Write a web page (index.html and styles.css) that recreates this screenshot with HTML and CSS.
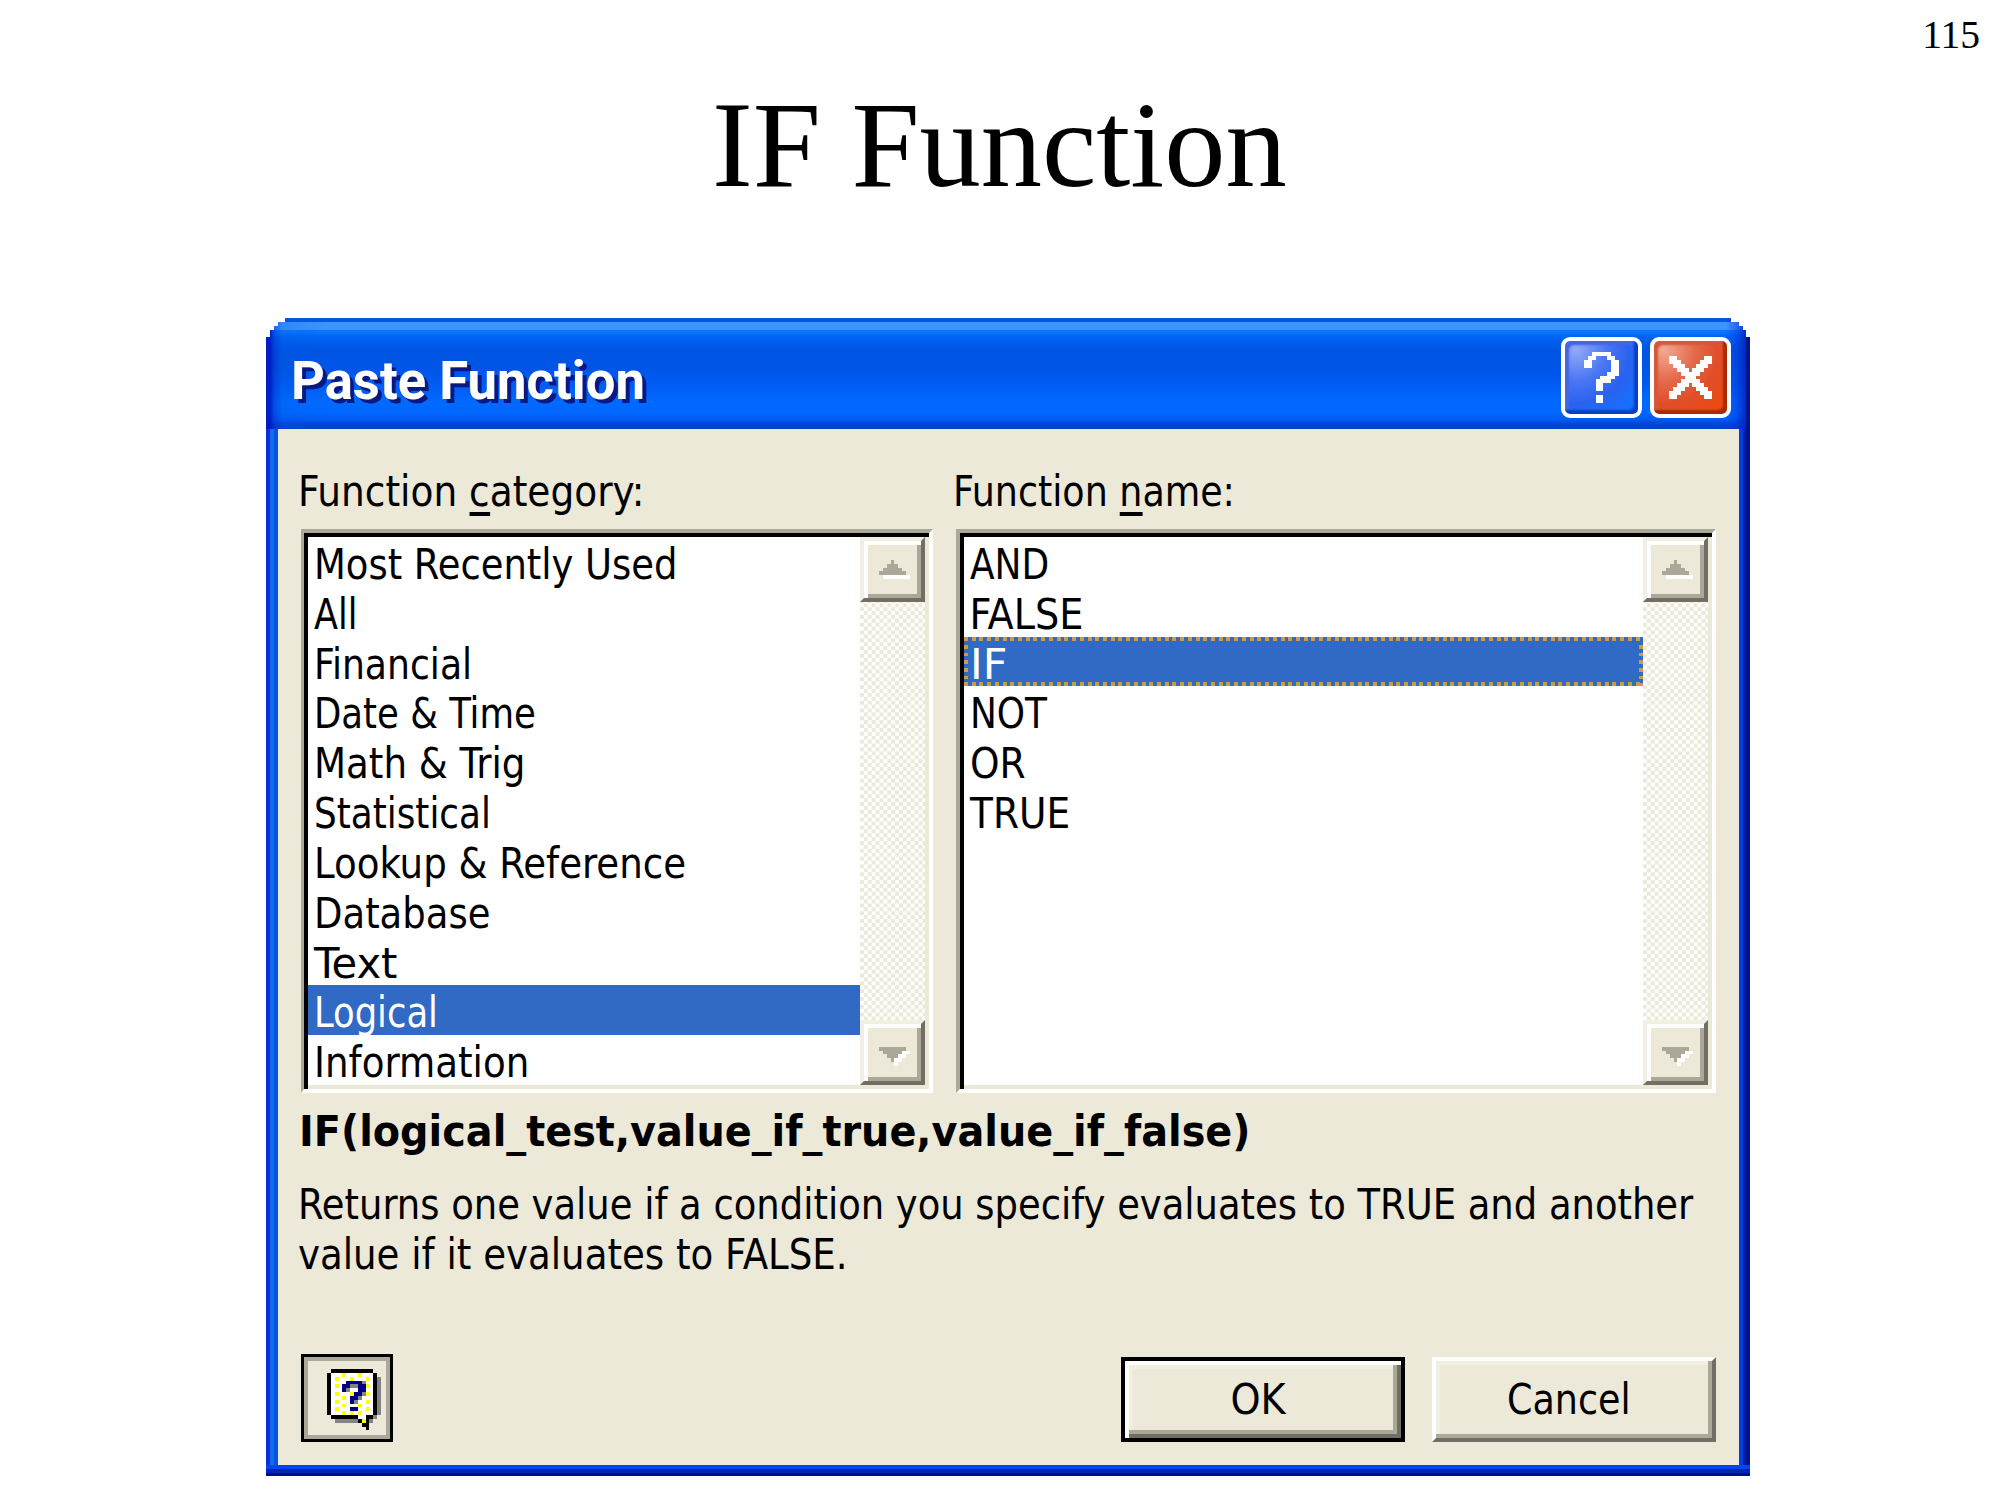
FILE: index.html
```
<!DOCTYPE html>
<html lang="en">
<head>
<meta charset="utf-8">
<title>IF Function</title>
<link rel="stylesheet" href="styles.css">
</head>
<body>
<main class="slide">
  <div class="page-number">115</div>
  <h1 class="heading"><span data-w="575">IF Function</span></h1>

  <section class="dialog">
    <header class="titlebar">
      <h2 class="title"><span data-w="354">Paste Function</span></h2>
      <div class="caption-buttons">
        <button class="caption help" aria-label="Help">
          <svg viewBox="0 0 21 21" shape-rendering="crispEdges"><path fill="#fff" d="M8 4h5v1h1v1h1v4h-1v1h-1v1h-2v2H9v-3h1v-1h2V9h1V6h-1V5H9v1H8v2H6V6h1V5h1zM9 15h2v2H9z"/></svg>
        </button>
        <button class="caption close" aria-label="Close">
          <svg viewBox="0 0 21 21" shape-rendering="crispEdges"><path fill="#fff" d="M5 5h2v1h1v1h1v1h1v1h1V8h1V7h1V6h1V5h2v2h-1v1h-1v1h-1v1h-1v1h1v1h1v1h1v1h1v2h-2v-1h-1v-1h-1v-1h-1v-1h-1v1H9v1H8v1H7v1H5v-2h1v-1h1v-1h1v-1h1v-1H8V9H7V8H6V7H5z"/></svg>
        </button>
      </div>
    </header>

    <div class="content">
      <div class="columns">
        <div class="column">
          <div class="label"><span data-w="346">Function <u>c</u>ategory:</span></div>
          <div class="listbox">
            <ul class="items">
              <li><span data-w="364">Most Recently Used</span></li>
              <li><span data-w="43">All</span></li>
              <li><span data-w="158">Financial</span></li>
              <li><span data-w="222">Date &amp; Time</span></li>
              <li><span data-w="211">Math &amp; Trig</span></li>
              <li><span data-w="177">Statistical</span></li>
              <li><span data-w="372">Lookup &amp; Reference</span></li>
              <li><span data-w="176">Database</span></li>
              <li><span data-w="84">Text</span></li>
              <li class="selected"><span data-w="124">Logical</span></li>
              <li><span data-w="215">Information</span></li>
            </ul>
            <div class="scrollbar">
              <div class="arrow"><svg viewBox="0 0 17 17" shape-rendering="crispEdges"><path fill="#fff" d="M6 10h7v1H6z"/><path fill="#aca899" d="M8 6h1v1h1v1h1v1h1v1H5V9h1V8h1V7h1z"/></svg></div>
              <div class="arrow"><svg viewBox="0 0 17 17" shape-rendering="crispEdges"><path fill="#fff" d="M11 8h2v1h-1v1h-1v1h-1v1H9v-2h1V9h1z"/><path fill="#aca899" d="M5 7h7v1h-1v1h-1v1H9v1H8v-1H7V9H6V8H5z"/></svg></div>
            </div>
          </div>
        </div>
        <div class="column wide">
          <div class="label"><span data-w="282">Function <u>n</u>ame:</span></div>
          <div class="listbox">
            <ul class="items">
              <li><span data-w="79">AND</span></li>
              <li><span data-w="114">FALSE</span></li>
              <li class="selected focused"><span data-w="37">IF</span></li>
              <li><span data-w="77">NOT</span></li>
              <li><span data-w="56">OR</span></li>
              <li><span data-w="100">TRUE</span></li>
            </ul>
            <div class="scrollbar">
              <div class="arrow"><svg viewBox="0 0 17 17" shape-rendering="crispEdges"><path fill="#fff" d="M6 10h7v1H6z"/><path fill="#aca899" d="M8 6h1v1h1v1h1v1h1v1H5V9h1V8h1V7h1z"/></svg></div>
              <div class="arrow"><svg viewBox="0 0 17 17" shape-rendering="crispEdges"><path fill="#fff" d="M11 8h2v1h-1v1h-1v1h-1v1H9v-2h1V9h1z"/><path fill="#aca899" d="M5 7h7v1h-1v1h-1v1H9v1H8v-1H7V9H6V8H5z"/></svg></div>
            </div>
          </div>
        </div>
      </div>

      <p class="syntax"><span data-w="951">IF(logical_test,value_if_true,value_if_false)</span></p>
      <p class="description">
        <span data-w="1395">Returns one value if a condition you specify evaluates to TRUE and another</span><br>
        <span data-w="550">value if it evaluates to FALSE.</span>
      </p>

      <footer class="actions">
        <button class="assistant" aria-label="Office Assistant">
          <svg viewBox="0 0 14 16" shape-rendering="crispEdges">
            <path fill="#848284" d="M13 2h1v10h-1v1h-1v1h-1v-2h1V2zM2 13h6v1H2z"/>
            <path fill="#000" d="M1 0h11v1h1v11h-1v1h-1v3h-1v-1H9v-1H8v-1H1v-1H0V1h1z"/>
            <path fill="#fff" d="M1 1h11v11h-2v1H8v-1H1z"/>
            <path fill="#ff0" d="M4 1h1v1H4zM8 1h1v1H8zM2 2h1v1H2zM6 2h1v1H6zM10 2h1v1h-1zM2 4h1v1H2zM6 4h1v1H6zM10 4h1v1h-1zM2 6h1v1H2zM6 6h1v1H6zM10 6h1v1h-1zM4 7h1v1H4zM2 8h1v1H2zM10 8h1v1h-1zM4 9h1v1H4zM8 9h1v1H8zM2 10h1v1H2zM10 10h1v1h-1zM4 11h1v1H4zM6 11h1v1H6zM8 11h1v1H8zM9 13h1v1H9z"/>
            <path fill="#848284" d="M9 3h1v1h-1zM6 4h2v1H6zM5 5h1v1H5zM9 6h1v1H9zM6 7h1v1H6zM8 7h1v1H8zM7 8h1v1H7z"/>
            <path fill="#000084" d="M5 3h4v1h1v2H9v1H8v1H7v1H6V7h1V6h1V4H6v1H5v1H4V4h1zM6 10h2v1H6z"/>
          </svg>
        </button>
        <div class="confirm">
          <button class="push default"><span data-w="55">OK</span></button>
          <button class="push"><span data-w="124">Cancel</span></button>
        </div>
      </footer>
    </div>
  </section>
</main>
<script src="fit.js"></script>
</body>
</html>
```
FILE: fit.js
```
document.querySelectorAll('[data-w]').forEach(function (el) {
  var ratio = Number(el.dataset.w) / el.offsetWidth;
  el.style.transform = 'scaleX(' + ratio.toFixed(4) + ')';
});
```
FILE: styles.css
```
* { box-sizing: border-box; }

body {
  margin: 0;
  background: #fff;
  color: #000;
  font-family: "DejaVu Sans Condensed", "DejaVu Sans", sans-serif;
  font-size: 42.5px;
}

.slide {
  width: 2000px;
  height: 1500px;
  overflow: hidden;
}

h1, h2, p, ul { margin: 0; padding: 0; font-weight: normal; }

[data-w] {
  display: inline-block;
  white-space: nowrap;
  transform-origin: left center;
}

.page-number {
  height: 75px;
  padding: 12px 20px 0 0;
  text-align: right;
  font: 39.5px/46px "Liberation Serif", serif;
}

.heading {
  height: 243px;
  padding-right: 2px;
  text-align: center;
  font: 122px/140px "Liberation Serif", serif;
}
.heading [data-w] { transform-origin: center; }

.dialog {
  width: 1484px;
  height: 1158px;
  margin-left: 266px;
  display: flex;
  flex-direction: column;
  background:
    linear-gradient(#0046f0 4px, #0025b0 4px 8px, #00108c 8px) 0 100% / 100% 11px no-repeat,
    linear-gradient(90deg, #0831d9 4px, #166aee 4px 8px, #0855dd 8px) 0 0 / 12px 100% no-repeat,
    linear-gradient(90deg, #0040e0 4px, #001fa8 4px 7px, #00138c 7px) 100% 0 / 11px 100% no-repeat;
  clip-path: polygon(19px 0, 1465px 0, 1465px 4px, 1473px 4px, 1473px 8px, 1477px 8px, 1477px 12px, 1480px 12px, 1480px 19px, 1484px 19px, 1484px 100%, 0 100%, 0 19px, 4px 19px, 4px 12px, 8px 12px, 8px 8px, 12px 8px, 12px 4px, 19px 4px);
}

.titlebar {
  height: 111px;
  flex: none;
  display: flex;
  justify-content: space-between;
  padding: 19px 19px 0 25px;
  background:
    linear-gradient(90deg, rgba(0,20,190,.85) 0 4px, rgba(0,40,200,.45) 8px, rgba(0,90,220,.2) 16px, transparent 60px),
    linear-gradient(270deg, #00148c 0 4px, rgba(0,30,190,.8) 4px, rgba(0,50,220,.4) 14px, transparent 24px),
    linear-gradient(#0855dd 4px, #3c94ff 4px 12px, #0a74ff 12px 15px, #0065f5 18px, #0054e3 32px, #0055e6 50px, #005cf5 68px, #006aff 84px, #0066ff 96px, #0058f0 102px, #0046d8 106px, #0040cc 111px);
}

.title {
  padding-top: 14px;
  font: bold 54px/60px Roboto, "Open Sans", sans-serif;
  color: #fff;
  text-shadow: 4px 4px 0 #0a1883;
}

.caption-buttons { display: flex; gap: 8px; }

.caption {
  width: 81px;
  height: 81px;
  padding: 0;
  border: 4px solid #fff;
  border-radius: 9px;
}
.caption svg { display: block; width: 81px; height: 81px; margin: -4px; }
.help {
  background: radial-gradient(circle at 15% 12%, #93a9f7, #4a76f3 35%, #2a62f0 60%, #1670ff 85%);
  box-shadow: inset -4px -4px 2px #0a3fc0, inset 4px 4px 2px #4466e0;
}
.close {
  background: radial-gradient(circle at 13% 12%, #f3a893, #e4694b 35%, #e04e28 60%, #ea4a12 85%);
  box-shadow: inset -4px -4px 2px #a82a08, inset 4px 4px 2px #d4583c;
}

.content {
  flex: 1;
  margin: 0 11px 11px 12px;
  padding: 0 23px;
  background: #ece9d8;
}

.columns { display: flex; justify-content: space-between; }
.column { width: 632px; }
.wide { width: 760px; }

.label {
  height: 100px;
  padding-top: 38px;
  line-height: 50px;
  margin-left: -3px;
}
.label u {
  text-decoration: none;
  background: linear-gradient(#000, #000) 0 100% / 100% 4px no-repeat;
}

.listbox {
  height: 564px;
  display: flex;
  background: #fff;
  border: solid;
  border-width: 4px 4px 4px 3px;
  border-color: #aca899 #fff #fff #aca899;
  box-shadow: inset 4px 4px 0 #000, inset -4px -4px 0 #ece9d8;
  padding: 4px 4px 4px 4px;
}
.wide .listbox { border-left-width: 4px; }

.items {
  flex: 1;
  list-style: none;
}
.items li {
  height: calc(100% / 11);
  padding-left: 5.5px;
  line-height: 56px;
}
.selected { background: #316ac5; color: #fff; }
.focused {
  background:
    repeating-linear-gradient(90deg, #ce9a4a 0 4px, transparent 4px 7.72px) 0 0 / 100% 4px no-repeat,
    repeating-linear-gradient(90deg, #ce9a4a 0 4px, transparent 4px 7.72px) 0 100% / 100% 4px no-repeat,
    repeating-linear-gradient(transparent 0 4px, #ce9a4a 4px 7.7px) 0 4px / 4px 100% no-repeat,
    repeating-linear-gradient(transparent 0 4px, #ce9a4a 4px 7.7px) 100% 4px / 4px 100% no-repeat,
    #316ac5;
}

.scrollbar {
  width: 65px;
  display: flex;
  flex-direction: column;
  justify-content: space-between;
  background: repeating-conic-gradient(#fff 0 25%, #ece9d8 0 50%) 0 0 / 7.8px 7.8px;
}
.arrow {
  height: 65px;
  background: #ece9d8;
  border: 4px solid;
  border-color: #f1efe2 #716f64 #716f64 #f1efe2;
  box-shadow: inset 4px 4px 0 #fff, inset -4px -4px 0 #aca899;
}
.arrow svg { display: block; width: 65px; height: 65px; margin: -4px; }

.syntax {
  margin: 14px 0 0 -2px;
  height: 50px;
  line-height: 50px;
  font-weight: bold;
}
.description {
  margin: 23px 0 0 -3px;
  height: 100px;
  line-height: 50px;
}

.actions {
  margin-top: 74px;
  display: flex;
  justify-content: space-between;
  align-items: flex-end;
}
.actions button { font: inherit; color: #000; background: #ece9d8; }

.assistant {
  width: 92px;
  height: 88px;
  padding: 0;
  border: 3px solid #000;
  box-shadow: inset 0 0 0 4px #aca899;
}
.assistant svg { display: block; width: 54px; height: 61.5px; margin: 3px 0 0 23px; }

.confirm { display: flex; gap: 27px; }
.push {
  width: 284px;
  height: 85px;
  padding: 0 10px 0 0;
  border: 4px solid;
  border-color: #fff #716f64 #716f64 #fff;
  box-shadow: inset -4px -4px 0 #aca899, inset 4px 4px 0 #f1efe2;
}
.push [data-w] { transform-origin: center; }
.push.default {
  border-color: #000;
  box-shadow: inset 4px 4px 0 #fff, inset -4px -4px 0 #716f64, inset -8px -8px 0 #aca899, inset 8px 8px 0 #f1efe2;
}
```
